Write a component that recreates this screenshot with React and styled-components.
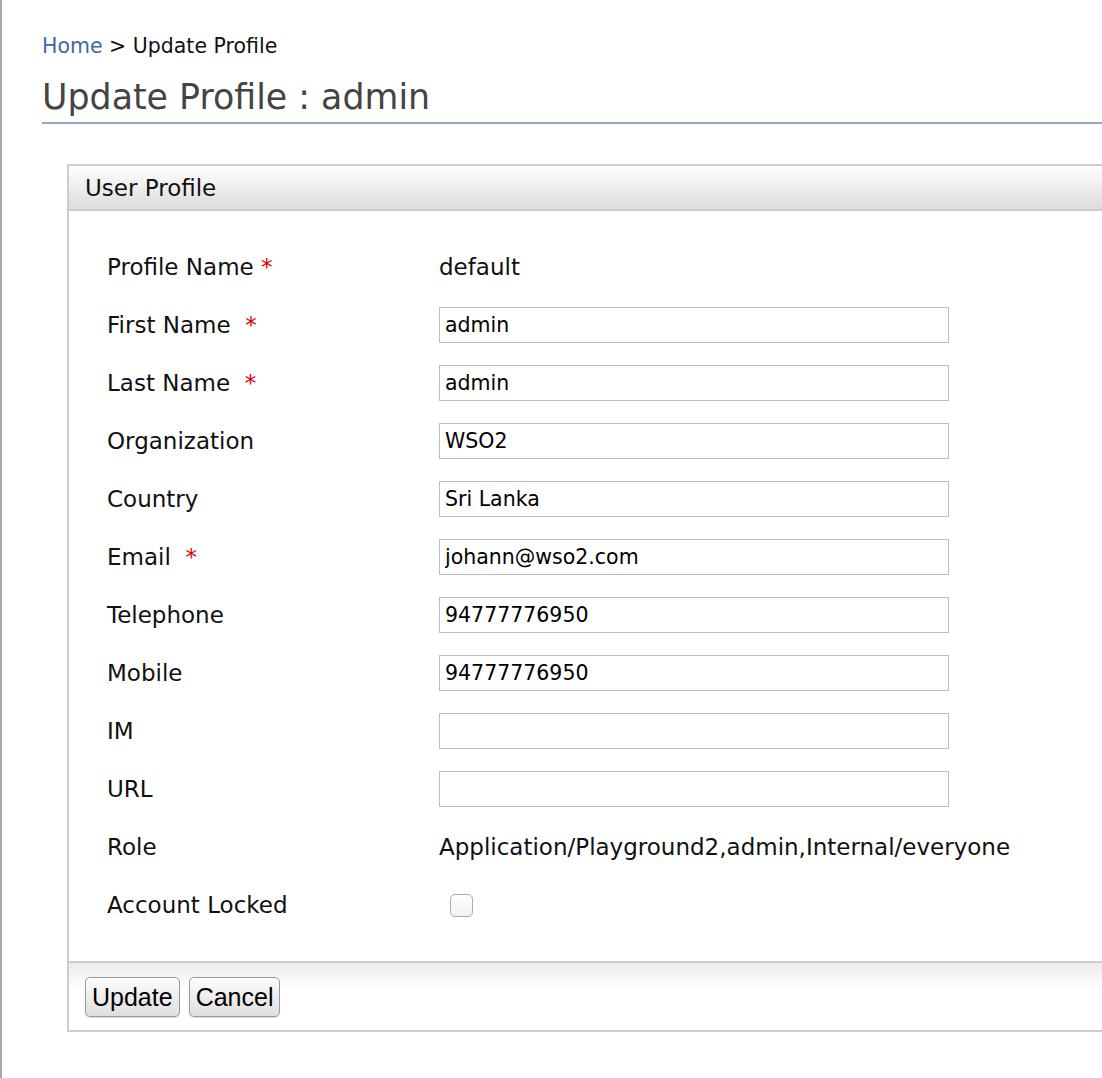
import React from "react";
import styled, { createGlobalStyle } from "styled-components";

const GlobalStyle = createGlobalStyle`
  html, body {
    margin: 0;
    padding: 0;
    overflow: hidden;
    background: #fff;
  }
  body {
    font-family: "DejaVu Sans", Verdana, sans-serif;
    color: #111;
  }
`;

const Page = styled.div`
  min-height: 100vh;
  border-left: 2px solid #a8a8a8;
  padding: 34px 0 40px 40px;
  box-sizing: border-box;
`;

const Breadcrumb = styled.div`
  font-size: 20.5px;
  line-height: 24px;
`;

const Crumb = styled.a`
  color: #3f6b9e;
  text-decoration: none;
`;

const Title = styled.h1`
  margin: 18px 0 0;
  padding-bottom: 4px;
  font-size: 34.8px;
  line-height: 42px;
  font-weight: normal;
  color: #444;
  border-bottom: 2px solid #94a7c7;
`;

const Box = styled.div`
  margin: 40px -40px 0 25px;
  border: 2px solid #cdcdcd;
`;

const BoxHeader = styled.div`
  height: 43px;
  display: flex;
  align-items: center;
  padding-left: 16px;
  font-size: 23px;
  color: #111;
  background: linear-gradient(#ffffff, #dcdcdc);
  border-bottom: 2px solid #cdcdcd;
`;

const Form = styled.div`
  padding: 27px 0 27px 38px;
`;

const Row = styled.div`
  display: flex;
  align-items: center;
  height: 58px;
`;

const Label = styled.div`
  width: 332px;
  flex-shrink: 0;
  font-size: 23px;
  white-space: pre;
`;

const Req = styled.span`
  color: #e00000;
`;

const Value = styled.div`
  font-size: 23px;
  white-space: nowrap;
`;

const TextInput = styled.input`
  width: 510px;
  height: 36px;
  box-sizing: border-box;
  border: 1px solid #bdbdbd;
  padding: 0 5px;
  font-family: "DejaVu Sans", sans-serif;
  font-size: 20.5px;
  color: #000;
  outline: none;
`;

const Check = styled.input`
  appearance: none;
  margin: 0 0 0 11px;
  width: 23px;
  height: 23px;
  border: 1px solid #acacac;
  border-radius: 5px;
  background: linear-gradient(#ffffff, #f2f2f2);
  box-sizing: border-box;
`;

const Footer = styled.div`
  border-top: 2px solid #cdcdcd;
  padding: 14px 0 13px 16px;
  display: flex;
  gap: 9px;
  background: linear-gradient(#ececec, #ffffff 40%);
`;

const Button = styled.button`
  height: 40px;
  padding: 0 6px;
  font-family: "Liberation Sans", Arial, sans-serif;
  font-size: 25px;
  color: #000;
  border: 1px solid #9a9a9a;
  border-radius: 5px;
  background: linear-gradient(#fdfdfd, #dedede);
  box-shadow: 0 1px 1px rgba(0, 0, 0, 0.15);
`;

const fields = [
  { label: "Profile Name ", req: true, text: "default" },
  { label: "First Name  ", req: true, input: "admin" },
  { label: "Last Name  ", req: true, input: "admin" },
  { label: "Organization", input: "WSO2" },
  { label: "Country", input: "Sri Lanka" },
  { label: "Email  ", req: true, input: "johann@wso2.com" },
  { label: "Telephone", input: "94777776950" },
  { label: "Mobile", input: "94777776950" },
  { label: "IM", input: "" },
  { label: "URL", input: "" },
  { label: "Role", text: "Application/Playground2,admin,Internal/everyone" },
];

export default function App() {
  return (
    <>
      <GlobalStyle />
      <Page>
        <Breadcrumb>
          <Crumb href="#">Home</Crumb> &gt; Update Profile
        </Breadcrumb>
        <Title>Update Profile : admin</Title>
        <Box>
          <BoxHeader>User Profile</BoxHeader>
          <Form>
            {fields.map((f) => (
              <Row key={f.label}>
                <Label>
                  {f.label}
                  {f.req && <Req>*</Req>}
                </Label>
                {f.text !== undefined ? (
                  <Value>{f.text}</Value>
                ) : (
                  <TextInput defaultValue={f.input} />
                )}
              </Row>
            ))}
            <Row>
              <Label>Account Locked</Label>
              <Check type="checkbox" />
            </Row>
          </Form>
          <Footer>
            <Button>Update</Button>
            <Button>Cancel</Button>
          </Footer>
        </Box>
      </Page>
    </>
  );
}
